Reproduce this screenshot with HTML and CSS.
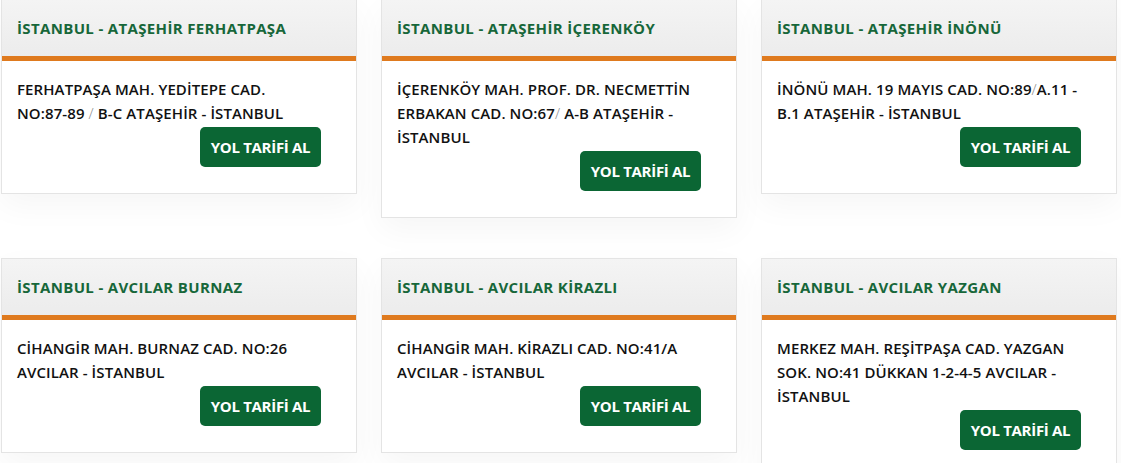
FILE: index.html
```html
<!DOCTYPE html>
<html lang="tr">

<head>
  <meta charset="UTF-8" />
  <meta name="viewport" content="width=device-width, initial-scale=1.0" />
  <title>Şubelerimiz</title>
  <link rel="stylesheet" href="styles.css">
</head>

<body>
  <div class="branches">
    <div class="branch">
      <div class="branch-head">İSTANBUL - ATAŞEHİR FERHATPAŞA</div>
      <div class="branch-body">
        <p class="address">FERHATPAŞA MAH. YEDİTEPE CAD.<br>NO:87-89 <span class="slash">/</span> B-C ATAŞEHİR - İSTANBUL</p>
        <div class="actions"><a class="route-btn" href="#">YOL TARİFİ AL</a></div>
      </div>
    </div>

    <div class="branch">
      <div class="branch-head">İSTANBUL - ATAŞEHİR İÇERENKÖY</div>
      <div class="branch-body">
        <p class="address">İÇERENKÖY MAH. PROF. DR. NECMETTİN<br>ERBAKAN CAD. NO:67<span class="slash">/</span> A-B ATAŞEHİR -<br>İSTANBUL</p>
        <div class="actions"><a class="route-btn" href="#">YOL TARİFİ AL</a></div>
      </div>
    </div>

    <div class="branch">
      <div class="branch-head">İSTANBUL - ATAŞEHİR İNÖNÜ</div>
      <div class="branch-body">
        <p class="address">İNÖNÜ MAH. 19 MAYIS CAD. NO:89<span class="slash">/</span>A.11 -<br>B.1 ATAŞEHİR - İSTANBUL</p>
        <div class="actions"><a class="route-btn" href="#">YOL TARİFİ AL</a></div>
      </div>
    </div>

    <div class="branch">
      <div class="branch-head">İSTANBUL - AVCILAR BURNAZ</div>
      <div class="branch-body">
        <p class="address">CİHANGİR MAH. BURNAZ CAD. NO:26<br>AVCILAR - İSTANBUL</p>
        <div class="actions"><a class="route-btn" href="#">YOL TARİFİ AL</a></div>
      </div>
    </div>

    <div class="branch">
      <div class="branch-head">İSTANBUL - AVCILAR KİRAZLI</div>
      <div class="branch-body">
        <p class="address">CİHANGİR MAH. KİRAZLI CAD. NO:41/A<br>AVCILAR - İSTANBUL</p>
        <div class="actions"><a class="route-btn" href="#">YOL TARİFİ AL</a></div>
      </div>
    </div>

    <div class="branch">
      <div class="branch-head">İSTANBUL - AVCILAR YAZGAN</div>
      <div class="branch-body">
        <p class="address">MERKEZ MAH. REŞİTPAŞA CAD. YAZGAN<br>SOK. NO:41 DÜKKAN 1-2-4-5 AVCILAR -<br>İSTANBUL</p>
        <div class="actions"><a class="route-btn" href="#">YOL TARİFİ AL</a></div>
      </div>
    </div>
  </div>
</body>

</html>
```

FILE: styles.css
```css
body {
  margin: 0;
  background-color: #ffffff;
  font-family: "Open Sans", "Liberation Sans", sans-serif;
  overflow: hidden;
}

.branches {
  display: grid;
  grid-template-columns: repeat(3, 356px);
  column-gap: 24px;
  row-gap: 40px;
  align-items: start;
  margin: -1px 0 0 1px;
}

.branch {
  border: 1px solid #e4e4e4;
  background-color: #ffffff;
  box-shadow: 0 12px 30px rgba(0, 0, 0, 0.04);
}

.branch-head {
  height: 56px;
  display: flex;
  align-items: center;
  padding: 0 15px;
  background: linear-gradient(180deg, #f4f4f4 0%, #ececec 100%);
  border-bottom: 5px solid #df7a1e;
  color: #17673a;
  font-size: 15px;
  font-weight: 700;
  letter-spacing: 0.35px;
}

.branch-body {
  padding: 16px 15px 26px;
}

.address {
  margin: 0;
  font-size: 15px;
  line-height: 24px;
  font-weight: 600;
  color: #111111;
  letter-spacing: 0.1px;
}

.slash {
  font-weight: 300;
  color: #8a8a8a;
}

.actions {
  display: flex;
  justify-content: flex-end;
  margin-top: 2px;
  padding-right: 20px;
}

.route-btn {
  display: flex;
  align-items: center;
  justify-content: center;
  width: 121px;
  height: 40px;
  border-radius: 5px;
  background-color: #0b6634;
  color: #ffffff;
  font-size: 15px;
  font-weight: 700;
  letter-spacing: -0.3px;
  text-decoration: none;
}
```
